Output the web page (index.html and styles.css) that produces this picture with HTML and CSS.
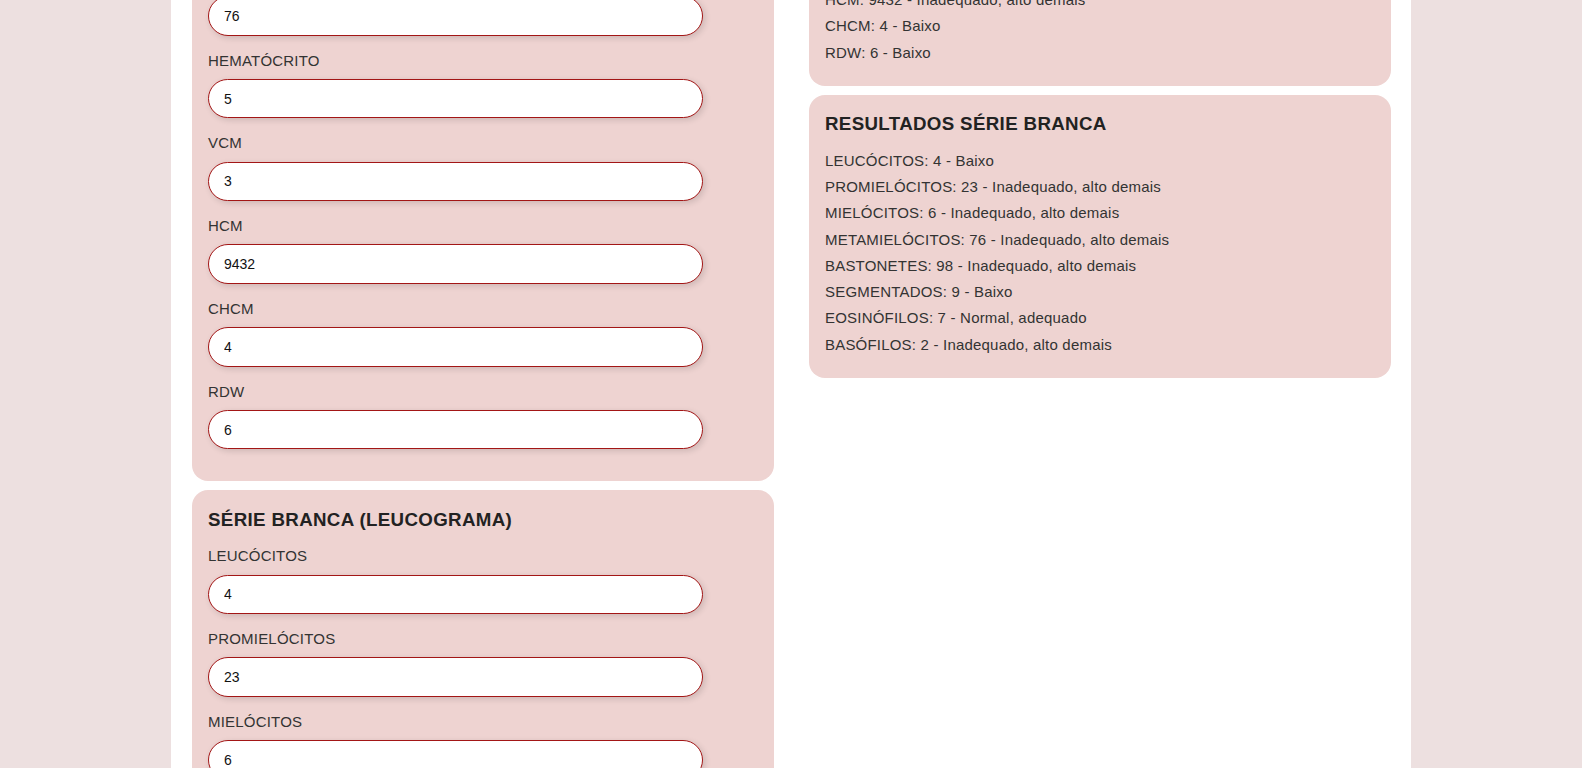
FILE: index.html
```html
<!DOCTYPE html>
<html lang="pt-BR">
<head>
<meta charset="utf-8">
<title>Hemograma</title>
<link rel="stylesheet" href="styles.css">
</head>
<body>
<main class="page">
  <div class="grid">
    <div class="column">
      <section class="card">
        <h3 class="card-title">SÉRIE VERMELHA (ERITROGRAMA)</h3>
        <div class="field"><label>ERITRÓCITOS</label><input class="input" type="text" value="8"></div>
        <div class="field"><label>HEMOGLOBINA</label><input class="input" type="text" value="76"></div>
        <div class="field"><label>HEMATÓCRITO</label><input class="input" type="text" value="5"></div>
        <div class="field"><label>VCM</label><input class="input" type="text" value="3"></div>
        <div class="field"><label>HCM</label><input class="input" type="text" value="9432"></div>
        <div class="field"><label>CHCM</label><input class="input" type="text" value="4"></div>
        <div class="field"><label>RDW</label><input class="input" type="text" value="6"></div>
      </section>
      <section class="card">
        <h3 class="card-title">SÉRIE BRANCA (LEUCOGRAMA)</h3>
        <div class="field"><label>LEUCÓCITOS</label><input class="input" type="text" value="4"></div>
        <div class="field"><label>PROMIELÓCITOS</label><input class="input" type="text" value="23"></div>
        <div class="field"><label>MIELÓCITOS</label><input class="input" type="text" value="6"></div>
        <div class="field"><label>METAMIELÓCITOS</label><input class="input" type="text" value="76"></div>
        <div class="field"><label>BASTONETES</label><input class="input" type="text" value="98"></div>
        <div class="field"><label>SEGMENTADOS</label><input class="input" type="text" value="9"></div>
        <div class="field"><label>EOSINÓFILOS</label><input class="input" type="text" value="7"></div>
        <div class="field"><label>BASÓFILOS</label><input class="input" type="text" value="2"></div>
      </section>
    </div>
    <div class="column">
      <section class="card">
        <h3 class="card-title">RESULTADOS SÉRIE VERMELHA</h3>
        <p class="result">ERITRÓCITOS: 8 - Inadequado, alto demais</p>
        <p class="result">HEMOGLOBINA: 76 - Inadequado, alto demais</p>
        <p class="result">HEMATÓCRITO: 5 - Baixo</p>
        <p class="result">VCM: 3 - Baixo</p>
        <p class="result">HCM: 9432 - Inadequado, alto demais</p>
        <p class="result">CHCM: 4 - Baixo</p>
        <p class="result">RDW: 6 - Baixo</p>
      </section>
      <section class="card">
        <h3 class="card-title">RESULTADOS SÉRIE BRANCA</h3>
        <p class="result">LEUCÓCITOS: 4 - Baixo</p>
        <p class="result">PROMIELÓCITOS: 23 - Inadequado, alto demais</p>
        <p class="result">MIELÓCITOS: 6 - Inadequado, alto demais</p>
        <p class="result">METAMIELÓCITOS: 76 - Inadequado, alto demais</p>
        <p class="result">BASTONETES: 98 - Inadequado, alto demais</p>
        <p class="result">SEGMENTADOS: 9 - Baixo</p>
        <p class="result">EOSINÓFILOS: 7 - Normal, adequado</p>
        <p class="result">BASÓFILOS: 2 - Inadequado, alto demais</p>
      </section>
    </div>
  </div>
</main>
<script src="script.js"></script>
</body>
</html>
```
FILE: styles.css
```css
html {
  scrollbar-width: none;
}
html::-webkit-scrollbar {
  display: none;
}
body {
  margin: 0;
  background: #ede0e0;
  font-family: "Liberation Sans", Arial, sans-serif;
  color: #333;
}
.page {
  width: 1240px;
  margin: 0 auto;
  box-sizing: border-box;
  padding: 20px 20px 40px 21px;
  background: #ffffff;
  min-height: 100vh;
}
.grid {
  display: grid;
  grid-template-columns: 1fr 1fr;
  column-gap: 35px;
  align-items: start;
}
.column {
  display: flex;
  flex-direction: column;
  gap: 9px;
}
.card {
  background: #eed3d1;
  border-radius: 16px;
  padding: 16px;
}
.card-title {
  margin: 2.5px 0 17px;
  font-size: 18.72px;
  font-weight: bold;
  line-height: 21.5px;
  letter-spacing: 0.35px;
  color: #222;
}
.field {
  margin-bottom: 16px;
}
.field label {
  display: block;
  font-size: 15px;
  line-height: 17.25px;
  letter-spacing: 0.2px;
  margin-bottom: 10px;
  color: #333;
}
.input {
  display: block;
  box-sizing: border-box;
  width: 90%;
  height: 39.5px;
  padding: 0 15px;
  border: 1px solid #a31616;
  border-radius: 20px;
  background: #fff;
  font-family: "Liberation Sans", Arial, sans-serif;
  font-size: 14px;
  color: #111;
  box-shadow: 2px 2px 6px rgba(0, 0, 0, 0.14);
  outline: none;
}
.result {
  margin: 9px 0;
  font-size: 15px;
  line-height: 17.25px;
  letter-spacing: 0.2px;
  color: #333;
}
```
FILE: script.js
```js
window.scrollTo(0, 191);
```
